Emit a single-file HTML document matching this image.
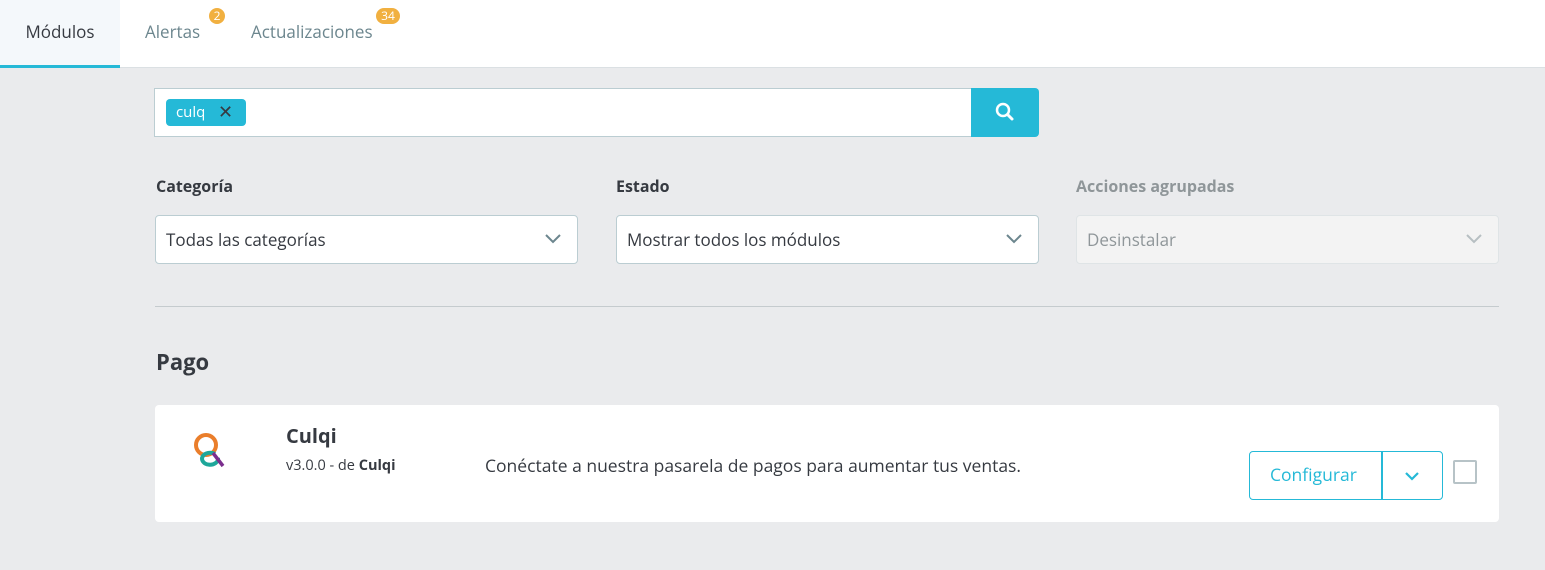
<!DOCTYPE html>
<html><head><meta charset="utf-8"><style>
*{box-sizing:border-box;margin:0;padding:0}
body{width:1545px;height:570px;background:#eaebed;font-family:"Open Sans","Liberation Sans",sans-serif;color:#363a41;position:relative;overflow:hidden}
.top{position:absolute;left:0;top:0;width:1545px;height:68px;background:#fff;border-bottom:1px solid #dbe0e3}
.tab{position:absolute;top:0;height:68px;font-size:17px;line-height:64px;color:#6c868e}
.t1{left:0;width:120px;background:#f4f8fb;color:#363a41;text-align:center;border-bottom:3px solid #25b9d7}
.badge{position:absolute;background:#f1b040;color:#fff;font-size:12px;line-height:16px;height:16px;border-radius:8px;text-align:center;padding:0 3px;min-width:16px}
.search{position:absolute;left:154px;top:88px;width:818px;height:49px;background:#fff;border:1px solid #bbcdd2}
.chip{position:absolute;left:11px;top:10px;width:80px;height:27px;background:#25b9d7;border-radius:4px;color:#fff;font-size:15px;line-height:26px;padding-left:10px}
.sbtn{position:absolute;left:971px;top:88px;width:68px;height:49px;background:#25b9d7;border-radius:0 4px 4px 0}
.lbl{position:absolute;top:175px;font-size:16px;font-weight:bold;color:#363a41}
.sel{position:absolute;top:215px;width:423px;height:49px;background:#fff;border:1px solid #bbcdd2;border-radius:4px;font-size:17px;line-height:47px;padding-left:10px;color:#363a41}
.sel svg{position:absolute;right:16px;top:18px}
hr{position:absolute;left:155px;top:306px;width:1344px;border:0;border-top:1px solid #c5cbce}
.card{position:absolute;left:155px;top:405px;width:1344px;height:117px;background:#fff;border-radius:4px}
</style></head><body>
<div class="top">
<div class="tab t1">Módulos</div>
<div class="tab" style="left:145px">Alertas</div>
<div class="badge" style="left:209px;top:8px">2</div>
<div class="tab" style="left:251px">Actualizaciones</div>
<div class="badge" style="left:376px;top:8px;width:24px">34</div>
</div>
<div class="search"><div class="chip">culq<span style="position:absolute;left:52px;top:0;color:#363a41;font-size:18px">✕</span></div></div>
<div class="sbtn"><svg width="68" height="49"><circle cx="32" cy="22" r="6" fill="none" stroke="#fff" stroke-width="2.5"/><line x1="36.5" y1="26.5" x2="41" y2="31" stroke="#fff" stroke-width="3" stroke-linecap="round"/></svg></div>
<div class="lbl" style="left:156px">Categoría</div>
<div class="lbl" style="left:616px">Estado</div>
<div class="lbl" style="left:1076px;color:#8f9699">Acciones agrupadas</div>
<div class="sel" style="left:155px">Todas las categorías<svg width="16" height="10"><path d="M1 1l7 7 7-7" fill="none" stroke="#6c868e" stroke-width="2"/></svg></div>
<div class="sel" style="left:616px">Mostrar todos los módulos<svg width="16" height="10"><path d="M1 1l7 7 7-7" fill="none" stroke="#6c868e" stroke-width="2"/></svg></div>
<div class="sel" style="left:1076px;background:#f3f3f3;border-color:#dfe4e6;color:#8f9699">Desinstalar<svg width="16" height="10"><path d="M1 1l7 7 7-7" fill="none" stroke="#b7bfc2" stroke-width="2"/></svg></div>
<hr>
<div style="position:absolute;left:156px;top:347px;font-size:22px;font-weight:bold">Pago</div>
<div class="card">
<svg style="position:absolute;left:37px;top:27px" width="40" height="40"><circle cx="14" cy="13" r="10" fill="none" stroke="#ea7e2b" stroke-width="4"/><path d="M26 26a8 6 0 1 1 -3 -4" fill="none" stroke="#1ea79a" stroke-width="4"/><line x1="21" y1="21" x2="31" y2="34" stroke="#7b2e8e" stroke-width="3.5"/></svg>
<div style="position:absolute;left:131px;top:17px;font-size:20px;font-weight:bold">Culqi</div>
<div style="position:absolute;left:131px;top:51px;font-size:14.5px">v3.0.0 - de <b>Culqi</b></div>
<div style="position:absolute;left:330px;top:49px;font-size:17.5px">Conéctate a nuestra pasarela de pagos para aumentar tus ventas.</div>
<div style="position:absolute;left:1094px;top:46px;width:194px;height:49px;border:1px solid #25b9d7;border-radius:4px;color:#25b9d7;font-size:17.5px;line-height:47px">
<span style="position:absolute;left:20px">Configurar</span>
<div style="position:absolute;left:131px;top:0;height:47px;border-left:2px solid #25b9d7"></div>
<svg style="position:absolute;left:155px;top:20px" width="14" height="9"><path d="M1 1l6 6 6-6" fill="none" stroke="#25b9d7" stroke-width="2.2"/></svg>
</div>
<div style="position:absolute;left:1298px;top:55px;width:24px;height:24px;border:2px solid #b7c3c7;border-radius:2px"></div>
</div>
</body></html>
